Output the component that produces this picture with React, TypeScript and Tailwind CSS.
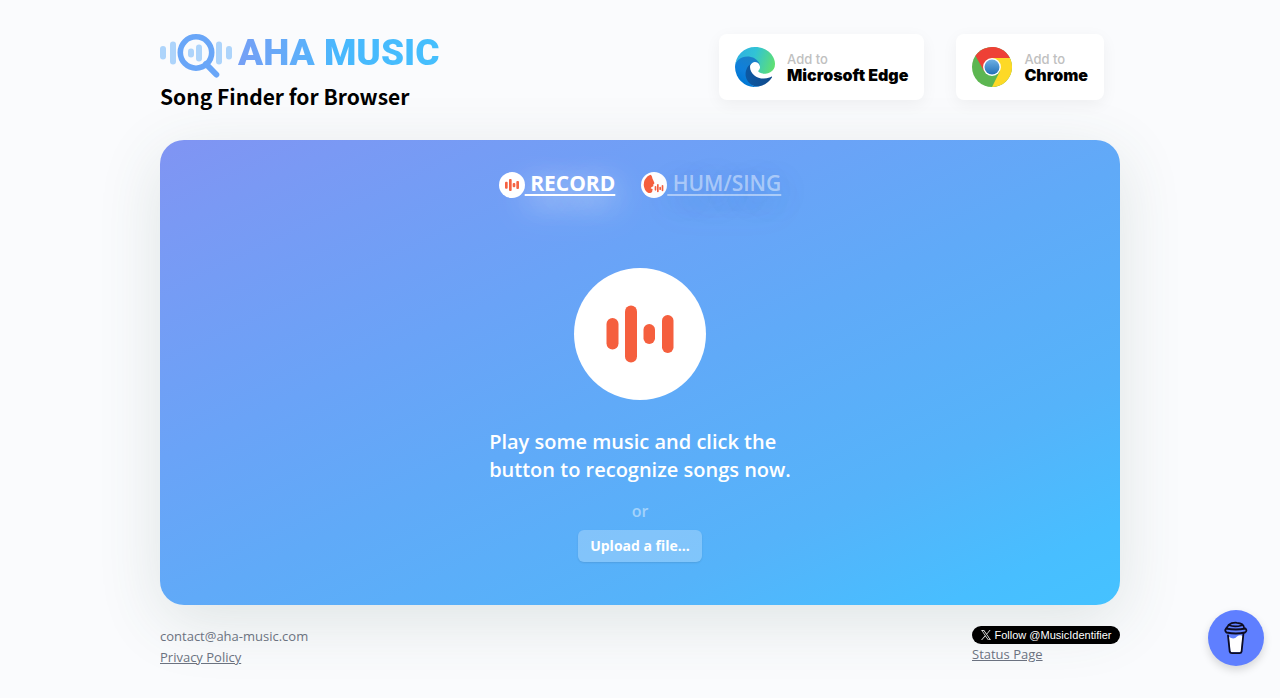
import React from 'react';

function Bars({ className }: { className: string }) {
  return (
    <svg viewBox="0 0 132 132" className={className} aria-hidden="true">
      <circle cx="66" cy="66" r="66" fill="#fff" />
      <g fill="#f55f3e">
        <rect x="32.5" y="50" width="12" height="31.5" rx="6" />
        <rect x="51" y="37.5" width="12" height="57" rx="6" />
        <rect x="69.5" y="56" width="11.5" height="20" rx="5.7" />
        <rect x="88" y="47" width="11.5" height="38" rx="5.7" />
      </g>
    </svg>
  );
}

function SmallBars() {
  return (
    <svg viewBox="0 0 78 78" className="mt-1 size-[26px] shrink-0" aria-hidden="true">
      <circle cx="39" cy="39" r="39" fill="#fff" />
      <g fill="#f55f3e">
        <rect x="18" y="29" width="8" height="21" rx="3" />
        <rect x="30" y="21" width="8" height="36" rx="3" />
        <rect x="41" y="33" width="8" height="13" rx="3" />
        <rect x="52" y="27" width="8" height="24" rx="3" />
      </g>
    </svg>
  );
}

function HumIcon() {
  return (
    <svg viewBox="0 0 78 78" className="mt-1 size-[26px] shrink-0" aria-hidden="true">
      <circle cx="39" cy="39" r="39" fill="#fff" />
      <path d="M29 8C34 11 33 18 36 23L40 32Q41 36 37 37L37 43Q31 45 29 49Q32 51 35 51L34 55Q35 62 27 63Q18 63 12 53Q5 38 11 24Q18 11 29 8Z" fill="#f55f3e" />
      <g fill="#f55f3e">
        <rect x="41" y="42" width="5" height="14" rx="2.5" />
        <rect x="48" y="36" width="5" height="25" rx="2.5" />
        <rect x="55" y="44" width="5" height="10" rx="2.5" />
        <rect x="62" y="39" width="5" height="19" rx="2.5" />
      </g>
    </svg>
  );
}

function LogoMark() {
  return (
    <svg viewBox="0 0 72 46" className="h-[46px] w-[72px] shrink-0" aria-hidden="true">
      <g fill="#add4fb">
        <rect x="0" y="12" width="6" height="13.500" rx="3" />
        <rect x="10" y="7.500" width="6" height="23" rx="3" />
        <rect x="28" y="14.500" width="6" height="9" rx="3" />
        <rect x="36" y="10.500" width="6" height="17" rx="3" />
        <rect x="56" y="7.500" width="6" height="23" rx="3" />
        <rect x="66" y="12" width="6" height="13.500" rx="3" />
      </g>
      <circle cx="36" cy="18.500" r="15.700" fill="none" stroke="#69a6f8" strokeWidth="5.600" />
      <path d="M46 30L56.300 40.500" stroke="#69a6f8" strokeWidth="6" strokeLinecap="round" />
    </svg>
  );
}

function EdgeIcon() {
  return (
    <svg viewBox="0 0 256 256" className="size-10 shrink-0" aria-hidden="true">
      <defs>
        <linearGradient id="edgeNavy" x1="63" y1="177" x2="241" y2="177" gradientUnits="userSpaceOnUse">
          <stop stopColor="#0c59a4" />
          <stop offset="1" stopColor="#114a8b" />
        </linearGradient>
        <linearGradient id="edgeBlue" x1="140" y1="95" x2="45" y2="225" gradientUnits="userSpaceOnUse">
          <stop stopColor="#1b80c8" />
          <stop offset=".6" stopColor="#0f7fdb" />
          <stop offset="1" stopColor="#0078d4" />
        </linearGradient>
        <linearGradient id="edgeGreen" x1="20" y1="60" x2="246" y2="140" gradientUnits="userSpaceOnUse">
          <stop stopColor="#2fb3e0" />
          <stop offset=".4" stopColor="#31c3d5" />
          <stop offset="1" stopColor="#60e070" />
        </linearGradient>
      </defs>
      <path fill="url(#edgeNavy)" d="M231 190.500c-3.400 1.800-6.900 3.400-10.500 4.700a101.900 101.900 0 0 1-35.900 6.500c-47.300 0-88.500-32.500-88.500-74.300 0-11.900 6.800-22.300 16.400-28.500-42.800 1.800-53.800 46.400-53.800 72.500 0 74 68.100 81.400 82.800 81.400 7.900 0 19.800-2.300 27-4.600l1.300-.4a128.300 128.300 0 0 0 66.600-52.800 4 4 0 0 0-5.400-5.600z" />
      <path fill="url(#edgeBlue)" d="M105.700 241.400A79.200 79.200 0 0 1 83 220.100a80.700 80.700 0 0 1 29.500-120c3.100-1.500 8.500-4.100 15.600-4a32.400 32.400 0 0 1 25.700 13 31.900 31.900 0 0 1 6.300 18.700c0-.2 24.500-79.600-80-79.600-43.900 0-80 41.700-80 78.200a130.200 130.200 0 0 0 12.100 56 128 128 0 0 0 156.400 67 75.500 75.500 0 0 1-62.800-8z" />
      <path fill="url(#edgeGreen)" d="M152.300 148.900c-.8 1-3.300 2.500-3.300 5.700 0 2.600 1.700 5.100 4.700 7.200 14.400 10 41.500 8.700 41.600 8.700a59.600 59.600 0 0 0 30.300-8.300A61.400 61.400 0 0 0 256 109.200c.3-22.400-8-37.300-11.300-43.900C223.500 23.900 177.700 0 128 0A128 128 0 0 0 0 126.200c.5-36.500 36.800-66 80-66 3.500 0 23.500.3 42 10a72.600 72.600 0 0 1 30.900 29.300c6.100 10.600 7.200 24.100 7.200 29.500s-2.700 13.300-7.800 19.900z" />
    </svg>
  );
}

function ChromeIcon() {
  return (
    <svg viewBox="0 0 48 48" className="size-10 shrink-0" aria-hidden="true">
      <defs>
        <linearGradient id="chromeBlue" x1="24" y1="15" x2="24" y2="33" gradientUnits="userSpaceOnUse">
          <stop stopColor="#6eb0e4" />
          <stop offset="1" stopColor="#2270b8" />
        </linearGradient>
      </defs>
      <circle cx="24" cy="24" r="24" fill="#5cb651" />
      <path d="M24 13.300H45.500A24 24 0 0 1 24 48L33.300 29.300Z" fill="#fdd926" />
      <path d="M24 24L14.700 29.300 4.200 10.500A24 24 0 0 1 45.500 13.300H24Z" fill="#ee4036" />
      <circle cx="24" cy="24" r="10.700" fill="#fff" />
      <circle cx="24" cy="24" r="9" fill="url(#chromeBlue)" />
    </svg>
  );
}

function CupIcon() {
  return (
    <svg viewBox="0 0 24 34" className="h-[34px] w-6" aria-hidden="true">
      <path d="M5 16Q10 19 13 15.500Q16 13.500 18.500 15L17 31H6.500Z" fill="#fff" />
      <g fill="none" stroke="#0d0c22" strokeWidth="1.800" strokeLinecap="round" strokeLinejoin="round">
        <path d="M4 14.500L5.700 30.500Q6 32.200 8 32.200H15.500Q17.300 32.200 17.600 30.500L19.500 12" />
        <path d="M2 7.500Q12 9.500 21.500 7.500Q23.500 10 21 11.500Q12 13.500 2.500 11.500Q.3 9.500 2 7.500L4 5" />
        <path d="M17.500 4.500Q10 6.500 4.500 4Q8 1.300 13 1.800Q19.500 2.200 20 6.500" />
      </g>
    </svg>
  );
}

function StoreLink({ name, icon }: { name: string; icon: React.ReactNode }) {
  return (
    <a href="#" className="flex h-[66px] items-center gap-3 rounded-lg bg-white px-4 font-['Inter',sans-serif] shadow-[0_4px_16px_rgba(0,0,0,0.05)]">
      {icon}
      <span className="flex flex-col">
        <span className="text-[13px] leading-4 font-medium text-[#c0c0c0]">Add to</span>
        <span className="text-base leading-4 font-black text-black">{name}</span>
      </span>
    </a>
  );
}

export default function App() {
  return (
    <div className="min-h-screen bg-[#fafbfd] font-['Open_Sans',sans-serif]">
      <div className="mx-auto max-w-[960px]">
        <header className="flex h-[140px] items-start justify-between pt-[34px] pr-4">
          <div>
            <div className="flex h-[46px] items-start gap-1.5">
              <LogoMark />
              <span className="bg-linear-to-r from-[#759ff5] via-[#48b8fd] via-50% to-[#45bffd] bg-clip-text font-['Roboto',sans-serif] text-[37px] leading-[38px] font-black text-transparent">AHA MUSIC</span>
            </div>
            <h1 className="font-['Noto_Sans_CJK_SC',sans-serif] text-[21px] leading-8 font-bold text-black">Song Finder for Browser</h1>
          </div>
          <nav className="flex gap-8">
            <StoreLink name="Microsoft Edge" icon={<EdgeIcon />} />
            <StoreLink name="Chrome" icon={<ChromeIcon />} />
          </nav>
        </header>

        <main className="flex h-[465px] flex-col items-center rounded-3xl bg-[linear-gradient(155deg,#8094f3_0%,#7a99f4_10%,#6aa3f7_35%,#60aaf8_52%,#55b3fa_75%,#48beff_91%,#45c2ff_100%)] pt-7 text-white shadow-[0_16px_64px_rgba(60,90,80,0.14)]">
          <nav className="flex gap-[26px] text-[21px] leading-[30px]">
            <a href="#" className="flex font-bold">
              <SmallBars />
              <span className="whitespace-pre underline decoration-2 underline-offset-3 [text-shadow:0_8px_32px_rgba(255,255,255,0.9)]"> RECORD</span>
            </a>
            <a href="#" className="flex font-semibold text-white/45">
              <HumIcon />
              <span className="whitespace-pre underline decoration-2 underline-offset-3 [text-shadow:0_8px_32px_rgba(60,120,180,0.3)]"> HUM/SING</span>
            </a>
          </nav>
          <button type="button" aria-label="Record" className="mt-[70px] rounded-full">
            <Bars className="size-[132px]" />
          </button>
          <p className="mt-7 text-xl leading-7 font-semibold">
            Play some music and click the
            <br />
            button to recognize songs now.
          </p>
          <span className="mt-[15px] text-base leading-6 font-semibold text-white/45">or</span>
          <button type="button" className="mt-[7px] h-8 rounded-md bg-white/25 px-3 text-sm font-bold shadow-[0_1px_2px_rgba(0,0,0,0.1)]">Upload a file...</button>
        </main>

        <footer className="flex justify-between pt-[21px] text-[13px] leading-[21px] text-[#6b7280]">
          <div className="flex flex-col items-start">
            <span>contact@aha-music.com</span>
            <a href="#" className="underline">Privacy Policy</a>
          </div>
          <div className="flex w-[148px] flex-col items-start">
            <a href="#" className="flex h-[18px] w-full items-center justify-center gap-1 rounded-full bg-black font-['Liberation_Sans',sans-serif] text-[11px] text-white">
              <svg viewBox="0 0 24 24" className="size-2.5" fill="currentColor" aria-hidden="true">
                <path d="M14.300 10.200 23 0h-2.100l-7.500 8.800L7.300 0H.3l9.200 13.300L.3 24h2.100l8-9.300 6.400 9.300h7zM11.400 13.500l-.9-1.300L3.100 1.600h3.200l6 8.500.9 1.300 7.700 11.100h-3.200z" />
              </svg>
              Follow @MusicIdentifier
            </a>
            <a href="#" className="underline">Status Page</a>
          </div>
        </footer>
      </div>
      <button type="button" aria-label="Buy a coffee" className="fixed right-4 bottom-8 flex size-14 items-center justify-center rounded-full bg-[#5f7fff] shadow-[0_4px_8px_rgba(0,0,0,0.15)]">
        <CupIcon />
      </button>
    </div>
  );
}
